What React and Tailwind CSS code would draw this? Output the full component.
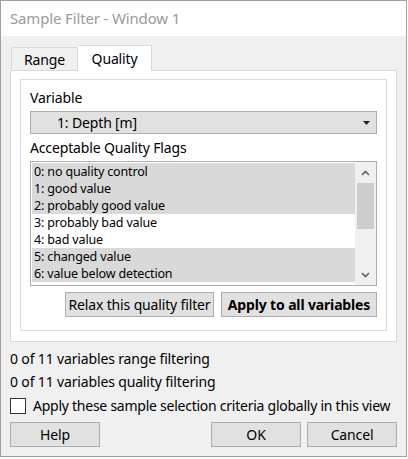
import React from "react";

const flags = [
  { label: "0: no quality control", on: true },
  { label: "1: good value", on: true },
  { label: "2: probably good value", on: true },
  { label: "3: probably bad value", on: false },
  { label: "4: bad value", on: false },
  { label: "5: changed value", on: true },
  { label: "6: value below detection", on: true },
];

const font = { fontFamily: '"Noto Sans", "Open Sans", sans-serif' };

const Button = ({ children, className = "" }) => (
  <div
    className={`flex items-center justify-center h-[25px] bg-[#e1e1e1] border border-[#adadad] text-[14px] text-black whitespace-nowrap ${className}`}
  >
    {children}
  </div>
);

export default function App() {
  return (
    <div className="w-[408px] h-[459px] bg-white tracking-[-0.15px]" style={font}>
      <div className="w-[407px] h-[457px] border border-[#a0a0a0] flex flex-col">
        <div className="h-[35px] bg-white flex items-center pl-[9px] text-[15px] text-[#9a9a9a]">
          Sample Filter - Window 1
        </div>
        <div className="flex-1 bg-[#f0f0f0] flex flex-col px-[9px]">
          <div className="flex items-end h-[34px] pl-[1px]">
            <div className="h-[23px] w-[67px] border border-[#d9d9d9] border-b-0 bg-[#f0f0f0] flex items-center justify-center text-[14px] text-black">
              Range
            </div>
            <div className="h-[26px] w-[74px] border border-[#d9d9d9] border-b-0 border-l-0 bg-white flex items-center justify-center text-[14px] text-black -mb-[1px] relative">
              Quality
            </div>
          </div>
          <div className="h-[272px] w-[387px] bg-white border border-[#d9d9d9] pt-[8px] px-[9px]">
            <div className="h-[252px] border border-[#dcdcdc] px-[9px] pt-[8px] flex flex-col">
              <div className="text-[14px] text-black leading-[20px] h-[23px]">Variable</div>
              <div className="h-[23px] bg-[#e1e1e1] border border-[#adadad] flex items-center justify-between pl-[26px] pr-[6px] text-[14px] text-black">
                <span>1: Depth [m]</span>
                <svg width="7" height="4" viewBox="0 0 7 4">
                  <path d="M0 0 H7 L3.5 4 Z" fill="#222" />
                </svg>
              </div>
              <div className="text-[14px] text-black leading-[20px] h-[27px] flex items-center">
                Acceptable Quality Flags
              </div>
              <div className="h-[125px] border border-[#adadad] flex bg-white">
                <div className="flex-1 pt-[1px] pl-[1px]">
                  {flags.map((f) => (
                    <div
                      key={f.label}
                      className={`h-[17px] leading-[17px] pl-[2px] text-[12.5px] text-black overflow-hidden ${f.on ? "bg-[#d9d9d9]" : "bg-white"}`}
                    >
                      {f.label}
                    </div>
                  ))}
                </div>
                <div className="w-[21px] bg-[#f0f0f0] flex flex-col items-center">
                  <div className="h-[21px] flex items-center justify-center">
                    <svg width="9" height="6" viewBox="0 0 9 6">
                      <path d="M1 5 L4.5 1.5 L8 5" stroke="#606060" strokeWidth="1.6" fill="none" />
                    </svg>
                  </div>
                  <div className="w-[17px] h-[46px] bg-[#cdcdcd]" />
                  <div className="flex-1" />
                  <div className="h-[21px] flex items-center justify-center">
                    <svg width="9" height="6" viewBox="0 0 9 6">
                      <path d="M1 1 L4.5 4.5 L8 1" stroke="#606060" strokeWidth="1.6" fill="none" />
                    </svg>
                  </div>
                </div>
              </div>
              <div className="flex justify-end gap-[7px] mt-[6px]">
                <Button className="w-[149px]">Relax this quality filter</Button>
                <Button className="w-[156px] font-bold">Apply to all variables</Button>
              </div>
            </div>
          </div>
          <div className="text-[14px] text-black h-[23px] flex items-center mt-[5px]">
            0 of 11 variables range filtering
          </div>
          <div className="text-[14px] text-black h-[23px] flex items-center">
            0 of 11 variables quality filtering
          </div>
          <div className="flex items-center h-[23px] gap-[7px] mt-[1px]">
            <div className="w-[16px] h-[16px] shrink-0 border border-[#333] bg-white" />
            <span className="text-[14px] text-black whitespace-nowrap tracking-[-0.25px]">
              Apply these sample selection criteria globally in this view
            </span>
          </div>
          <div className="flex items-center mt-[5px]">
            <Button className="w-[90px]">Help</Button>
            <div className="flex-1" />
            <Button className="w-[90px]">OK</Button>
            <Button className="w-[90px] ml-[6px]">Cancel</Button>
          </div>
        </div>
      </div>
    </div>
  );
}
